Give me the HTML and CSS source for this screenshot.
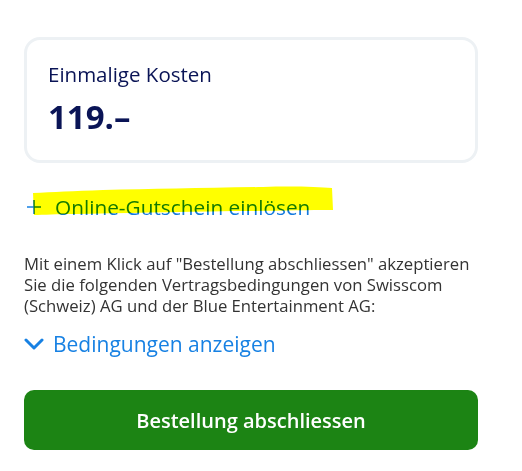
FILE: index.html
```html
<!DOCTYPE html>
<html lang="de">
<head>
<meta charset="utf-8">
<title>Bestellung</title>
<link rel="stylesheet" href="styles.css">
</head>
<body>
<div class="page">
  <section class="card">
    <div class="card-title">Einmalige Kosten</div>
    <div class="card-price">119.–</div>
  </section>

  <div class="voucher">
    <a class="voucher-link" href="#">
      <svg class="plus" width="16" height="16" viewBox="0 0 16 16"><path d="M8 1v14M1 8h14" stroke="#1781e3" stroke-width="1.6" fill="none"/></svg>
      <span>Online-Gutschein einlösen</span>
    </a>
    <svg class="marker" width="302" height="36" viewBox="0 0 302 36"><path d="M0 8 C20 7 40 6 70 5 C120 4 170 3 230 2 C260 1 285 2 299 3 L300 25 C270 25 240 26 200 26 C140 27 90 28 40 29 C25 29 10 30 1 30 Z" fill="#ffff00"/></svg>
  </div>

  <p class="legal">Mit einem Klick auf "Bestellung abschliessen" akzeptieren Sie die folgenden Vertragsbedingungen von Swisscom (Schweiz) AG und der Blue Entertainment AG:</p>

  <a class="terms" href="#">
    <svg class="chev" width="20" height="12" viewBox="0 0 20 12"><path d="M2 2l8 8 8-8" stroke="#1781e3" stroke-width="3" fill="none" stroke-linecap="round" stroke-linejoin="round"/></svg>
    <span>Bedingungen anzeigen</span>
  </a>

  <button class="submit" type="button">Bestellung abschliessen</button>
</div>
</body>
</html>
```

FILE: styles.css
```css
html, body {
  margin: 0;
  padding: 0;
  background: #ffffff;
}

.page {
  width: 454px;
  padding: 37px 44px 0 24px;
  font-family: "Open Sans", "Noto Sans", sans-serif;
}

.card {
  box-sizing: border-box;
  height: 126px;
  border: 3px solid #edf1f4;
  border-radius: 16px;
  padding: 21px 21px 0 21px;
  color: #0a1456;
}

.card-title {
  font-size: 20.5px;
  line-height: 26px;
}

.card-price {
  margin-top: 12px;
  font-size: 33px;
  line-height: 36px;
  font-weight: 700;
}

.voucher {
  position: relative;
  margin-top: 29px;
  height: 30px;
}

.voucher-link {
  position: relative;
  z-index: 1;
  display: flex;
  align-items: center;
  gap: 13px;
  padding-left: 2px;
  color: #1479de;
  text-decoration: none;
  font-size: 20.8px;
  line-height: 30px;
}

.plus {
  flex: none;
}

.marker {
  position: absolute;
  left: 9px;
  top: -7px;
  z-index: 2;
  mix-blend-mode: multiply;
  pointer-events: none;
}

.legal {
  margin: 31px 0 0 0;
  font-size: 16.7px;
  line-height: 21px;
  color: #333333;
}

.terms {
  display: flex;
  align-items: center;
  gap: 9px;
  margin-top: 13px;
  color: #1781e3;
  text-decoration: none;
  font-size: 21px;
  line-height: 30px;
}

.chev {
  flex: none;
}

.submit {
  display: block;
  width: 454px;
  height: 60px;
  margin-top: 31px;
  border: none;
  border-radius: 10px;
  background: #1c8414;
  color: #ffffff;
  font-family: "Open Sans", "Noto Sans", sans-serif;
  font-size: 20px;
  font-weight: 600;
  padding: 0;
}
```
